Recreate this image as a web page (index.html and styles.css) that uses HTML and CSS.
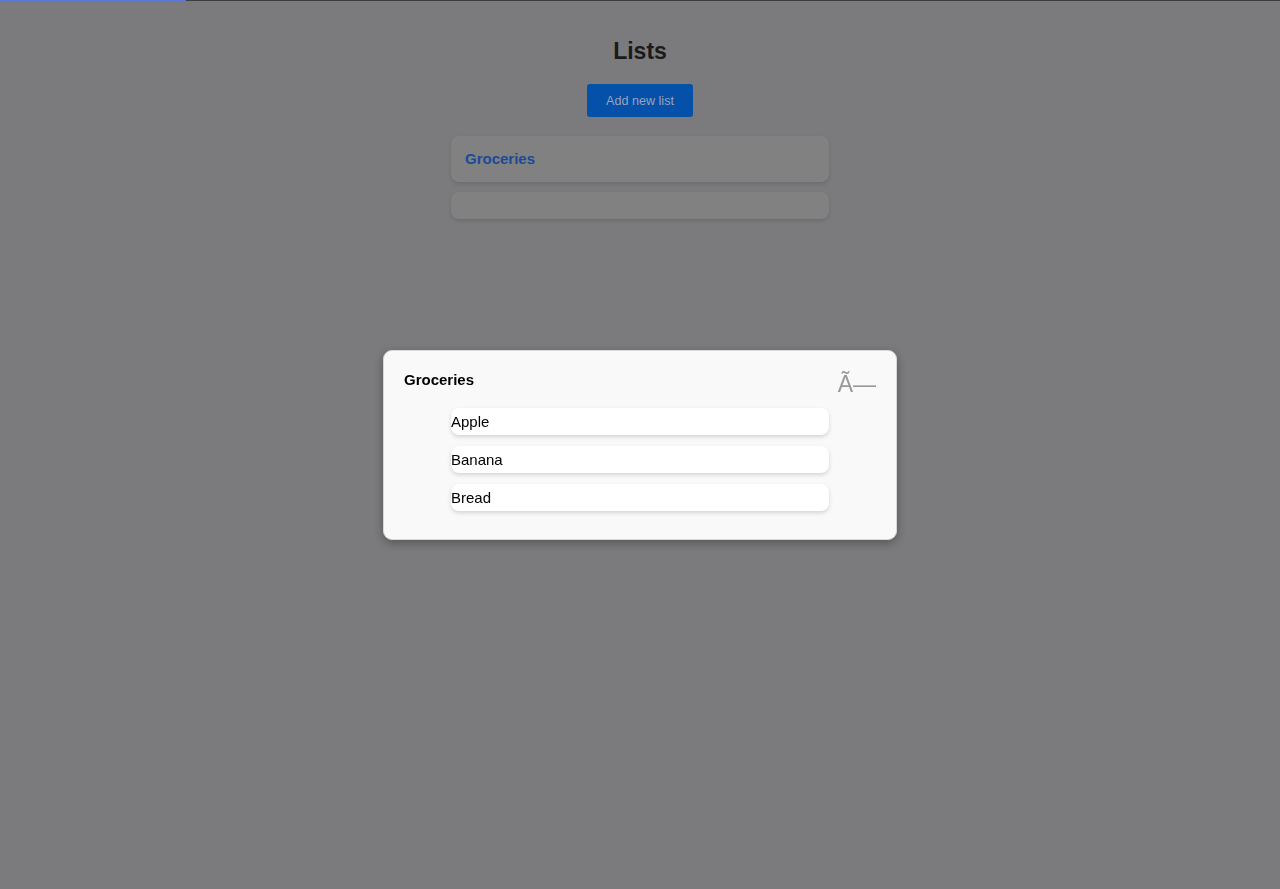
FILE: index.html
```html
<!DOCTYPE html>
<html lang="en">
<head>
<meta charset="utf-8">
<title>Lists</title>
<link rel="stylesheet" href="styles.css">
</head>
<body>
<div class="progress"><div class="progress-fill"></div></div>
<main class="page">
  <h1 class="title">Lists</h1>
  <button class="add-btn" type="button">Add new list</button>
  <div class="cards">
    <div class="card"><a class="card-link" href="#">Groceries</a></div>
    <div class="card card-empty"></div>
  </div>
</main>
<div class="overlay">
  <div class="modal">
    <div class="modal-head">
      <h2 class="modal-title">Groceries</h2>
      <button class="close" type="button">Ã—</button>
    </div>
    <ul class="items">
      <li class="item">Apple</li>
      <li class="item">Banana</li>
      <li class="item">Bread</li>
    </ul>
  </div>
</div>
</body>
</html>
```

FILE: styles.css
```css
html, body {
  margin: 0;
  padding: 0;
  height: 100%;
}
body {
  background: #7b7b7d;
  font-family: "Liberation Sans", Arial, sans-serif;
  color: #1a1a1a;
}
.progress {
  height: 1px;
  background: #3c3c3e;
  position: relative;
}
.progress-fill {
  width: 186px;
  height: 2px;
  background: #5b78d8;
}
.page {
  display: flex;
  flex-direction: column;
  align-items: center;
  padding-top: 36px;
}
.title {
  margin: 0;
  font-size: 23px;
  line-height: 28px;
  font-weight: bold;
  color: #1a1a1a;
}
.add-btn {
  margin-top: 19px;
  width: 106px;
  height: 33px;
  border: none;
  border-radius: 3px;
  background: #0550a8;
  color: #98a4bc;
  font-family: "Liberation Sans", Arial, sans-serif;
  font-size: 12.6px;
  padding: 0;
}
.cards {
  margin-top: 19px;
  width: 378px;
  display: flex;
  flex-direction: column;
  gap: 10px;
}
.card {
  background: #818182;
  border-radius: 8px;
  padding: 14px;
  box-shadow: 0 2px 4px rgba(0,0,0,0.12);
  line-height: 18px;
}
.card-empty {
  height: 0;
  padding: 13px 14px 14px;
}
.card-link {
  color: #1b4a98;
  font-weight: bold;
  font-size: 15px;
  text-decoration: none;
}
.overlay {
  position: fixed;
  inset: 0;
  display: flex;
  align-items: center;
  justify-content: center;
}
.modal {
  width: 472px;
  background: #f9f9f9;
  border-radius: 9px;
  padding: 20px 20px 28px;
  box-shadow: 0 3px 10px rgba(0,0,0,0.3);
  border: 1px solid #d8d8d8;
}
.modal-head {
  display: flex;
  justify-content: space-between;
  align-items: flex-start;
  height: 37px;
}
.modal-title {
  margin: 0;
  font-size: 15px;
  line-height: 17px;
  font-weight: bold;
  color: #000;
}
.close {
  border: none;
  background: none;
  padding: 0;
  margin-top: 1px;
  font-family: "Liberation Sans", Arial, sans-serif;
  font-size: 23px;
  line-height: 24px;
  color: #999;
}
.items {
  list-style: none;
  margin: 0 auto;
  padding: 0;
  width: 378px;
  display: flex;
  flex-direction: column;
  gap: 11px;
}
.item {
  background: #fff;
  border-radius: 8px;
  box-shadow: 0 2px 4px rgba(0,0,0,0.15);
  font-size: 15px;
  line-height: 19px;
  padding: 4px 0;
  color: #000;
}
```
